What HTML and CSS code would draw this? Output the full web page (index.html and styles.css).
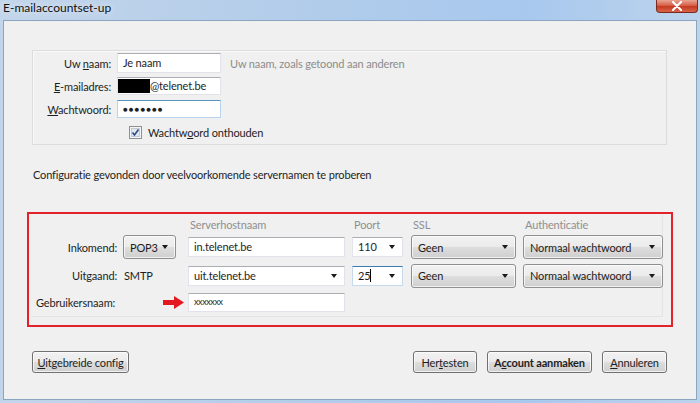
FILE: index.html
```html
<!DOCTYPE html>
<html lang="nl">
<head>
    <meta charset="UTF-8">
    <title>E-mailaccountset-up</title>
    <link rel="stylesheet" href="styles.css">
</head>
<body>
    <div class="window">
        <!-- Title bar -->
        <div class="titlebar">
            <span class="title">E-mailaccountset-up</span>
            <button class="close-btn" title="Sluiten">
                <svg width="12" height="10" viewBox="0 0 12 10">
                    <path d="M2 1 L10 9 M10 1 L2 9" stroke="#fff" stroke-width="2.2" stroke-linecap="round"/>
                </svg>
            </button>
        </div>

        <div class="client">
            <!-- Identity -->
            <div class="identity">
                <label class="field-label">Uw <u>n</u>aam:</label>
                <div class="textbox">Je naam</div>
                <span class="hint">Uw naam, zoals getoond aan anderen</span>

                <label class="field-label"><u>E</u>-mailadres:</label>
                <div class="textbox small"><span class="redacted"></span>@telenet.be</div>
                <span></span>

                <label class="field-label"><u>W</u>achtwoord:</label>
                <div class="textbox small hover"><span class="dots">&#9679;&#9679;&#9679;&#9679;&#9679;&#9679;&#9679;</span></div>
                <span></span>

                <span></span>
                <label class="check-row">
                    <svg class="checkbox" width="13" height="13" viewBox="0 0 13 13">
                        <rect x="0.5" y="0.5" width="12" height="12" fill="#f4f6f9" stroke="#8f8f8f"/>
                        <rect x="2.5" y="2.5" width="8" height="8" fill="#e2e8f0" stroke="#c2cad4"/>
                        <path d="M3.5 6.5 L5.5 9 L9.5 3.5" fill="none" stroke="#2c4b86" stroke-width="1.6"/>
                    </svg>
                    <span>Wachtw<u>o</u>ord onthouden</span>
                </label>
                <span></span>
            </div>

            <p class="status">Configuratie gevonden door veelvoorkomende servernamen te proberen</p>

            <!-- Server settings -->
            <div class="red-box">
                <div class="server-panel">
                    <span></span>
                    <span></span>
                    <span class="col-head">Serverhostnaam</span>
                    <span class="col-head">Poort</span>
                    <span class="col-head">SSL</span>
                    <span class="col-head">Authenticatie</span>

                    <span class="row-label">Inkomend:</span>
                    <div class="dropdown type">POP3<i class="arrow"></i></div>
                    <div class="textbox server">in.telenet.be</div>
                    <div class="textbox port">110<i class="arrow"></i></div>
                    <div class="dropdown ssl">Geen<i class="arrow"></i></div>
                    <div class="dropdown auth">Normaal wachtwoord<i class="arrow"></i></div>

                    <span class="row-label">Uitgaand:</span>
                    <span class="plain">SMTP</span>
                    <div class="textbox server">uit.telenet.be<i class="arrow"></i></div>
                    <div class="textbox port focused">25<span class="caret"></span><i class="arrow"></i></div>
                    <div class="dropdown ssl">Geen<i class="arrow"></i></div>
                    <div class="dropdown auth">Normaal wachtwoord<i class="arrow"></i></div>

                    <span class="row-label user-label">Gebruikersnaam:</span>
                    <span class="pointer">
                        <svg width="21" height="13" viewBox="0 0 21 13">
                            <path d="M0 4 H11 V0 L21 6.5 L11 13 V9 H0 Z" fill="#e3191f"/>
                        </svg>
                    </span>
                    <div class="textbox server user">xxxxxxx</div>
                    <span></span>
                    <span></span>
                    <span></span>
                </div>
            </div>

            <!-- Buttons -->
            <div class="actions">
                <button class="btn config"><u>U</u>itgebreide config</button>
                <div class="actions-right">
                    <button class="btn retest">Her<u>t</u>esten</button>
                    <button class="btn primary">A<u>c</u>count aanmaken</button>
                    <button class="btn cancel"><u>A</u>nnuleren</button>
                </div>
            </div>
        </div>
    </div>
</body>
</html>
```

FILE: styles.css
```css
* {
    margin: 0;
    padding: 0;
    box-sizing: border-box;
}

body {
    width: 700px;
    height: 403px;
    overflow: hidden;
    font-family: 'Lato', 'Liberation Sans', sans-serif;
    font-size: 11px;
    letter-spacing: -0.15px;
    color: #1e1e1e;
    background: linear-gradient(to right, #c3d5ea 0%, #b3cdea 40%, #a8c8ee 75%, #bcd3ec 100%);
}

u {
    text-decoration: underline;
    text-underline-offset: 1px;
}

.window {
    display: flex;
    flex-direction: column;
    height: 403px;
}

/* Title bar */
.titlebar {
    height: 20px;
    display: flex;
    justify-content: space-between;
    align-items: flex-start;
    padding-left: 3px;
}

.title {
    font-size: 12px;
    letter-spacing: 0;
    line-height: 16px;
    color: #111;
    text-shadow: 0 0 6px rgba(255, 255, 255, 0.9);
}

.close-btn {
    width: 42px;
    height: 13px;
    margin-right: 2px;
    border: 1px solid #7a2a20;
    border-top: none;
    border-radius: 0 0 4px 4px;
    background: linear-gradient(#e9a494, #d5583f 50%, #c2391e 51%, #d9634a);
    display: flex;
    align-items: center;
    justify-content: center;
}

/* Client area */
.client {
    flex: 1;
    margin: 0 3px 3px 3px;
    background: #f0f0f0;
    border: 1px solid #8ba4c0;
    padding: 29px 0 0 0;
}

.identity {
    margin-left: 28px;
    width: 635px;
    height: 95px;
    border: 1px solid #dcdcdc;
    box-shadow: inset 1px 1px 0 #fafafa;
    padding-top: 2px;
    display: grid;
    grid-template-columns: 78px 104px 1fr;
    grid-auto-rows: 20px;
    row-gap: 3px;
    column-gap: 6px;
    align-items: center;
}

.field-label {
    text-align: right;
}

.textbox {
    height: 20px;
    background: #fff;
    border: 1px solid #e2e3ea;
    border-top-color: #abadb3;
    padding: 0 5px;
    line-height: 18px;
    display: flex;
    align-items: center;
    position: relative;
    white-space: nowrap;
}

.textbox.small {
    height: 18px;
}

.textbox.hover {
    border-color: #b9d4ee;
    border-top-color: #5794bf;
}

.redacted {
    display: inline-block;
    width: 32px;
    height: 14px;
    background: #000;
    margin-left: -5px;
}

.dots {
    font-size: 8px;
    letter-spacing: 1px;
}

.hint {
    color: #8c8c8c;
    padding-left: 3px;
}

.check-row {
    grid-column: 2 / 4;
    display: flex;
    align-items: center;
    gap: 6px;
    padding-left: 12px;
}

.status {
    margin: 22px 0 0 29px;
    line-height: 16px;
}

/* Server settings */
.red-box {
    margin: 29px 0 0 23px;
    width: 646px;
    height: 115px;
    border: 2px solid #e1222b;
    padding: 0 8px 8px 2px;
}

.server-panel {
    height: 100%;
    border-right: 1px solid #e4e4e4;
    border-bottom: 1px solid #e4e4e4;
    display: grid;
    grid-template-columns: 92px 65px 164px 59px 112px 140px;
    grid-template-rows: 14px 24px 25px 20px;
    row-gap: 4px;
    padding-top: 3px;
    align-items: center;
}

.col-head {
    color: #8f8f8f;
    padding-left: 2px;
}

.row-label {
    text-align: right;
    padding-right: 6px;
}

.user-label {
    text-align: left;
    padding-left: 5px;
}

.plain {
    padding-left: 1px;
}

.pointer {
    display: flex;
    justify-content: flex-end;
    padding-right: 4px;
    padding-top: 1px;
}

.dropdown {
    height: 24px;
    border: 1px solid #8e8f8f;
    border-radius: 3px;
    background: linear-gradient(#f2f2f2 0%, #ebebeb 48%, #dddddd 52%, #cfcfcf 100%);
    box-shadow: inset 0 0 0 1px rgba(255, 255, 255, 0.7);
    display: flex;
    align-items: center;
    padding: 0 6px;
    position: relative;
    white-space: nowrap;
}

.dropdown.type { width: 53px; }
.dropdown.ssl { width: 105px; }
.dropdown.auth { width: 140px; }

.textbox.server { width: 157px; }
.textbox.port { width: 51px; }
.textbox.user { height: 19px; font-size: 9px; letter-spacing: -0.4px; }

.textbox.focused {
    border-color: #c5daed;
    border-top-color: #3d7bad;
}

.caret {
    display: inline-block;
    width: 1px;
    height: 13px;
    background: #000;
}

.arrow {
    position: absolute;
    right: 7px;
    top: 50%;
    margin-top: -2px;
    width: 0;
    height: 0;
    border-left: 3.5px solid transparent;
    border-right: 3.5px solid transparent;
    border-top: 4px solid #1a1a1a;
}

/* Buttons */
.actions {
    margin: 24px 0 0 28px;
    width: 635px;
    display: flex;
    justify-content: space-between;
}

.actions-right {
    display: flex;
    gap: 10px;
}

.btn {
    height: 22px;
    padding: 0 4px;
    border: 1px solid #707070;
    border-radius: 3px;
    background: linear-gradient(#f2f2f2 0%, #ebebeb 48%, #dddddd 52%, #cfcfcf 100%);
    box-shadow: inset 0 0 0 1px rgba(255, 255, 255, 0.7);
    font-family: inherit;
    font-size: 11px;
    letter-spacing: -0.15px;
    color: #1e1e1e;
    white-space: nowrap;
}

.btn.config { width: 97px; }
.btn.retest { width: 64px; }
.btn.cancel { width: 65px; }

.btn.primary {
    font-weight: bold;
    width: 105px;
}
```
